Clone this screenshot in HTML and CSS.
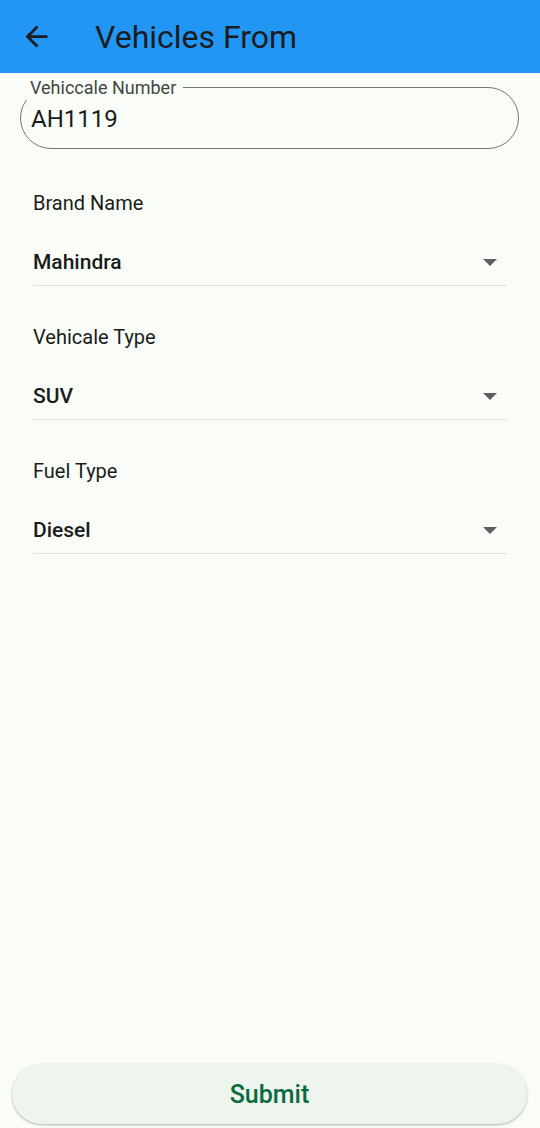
FILE: index.html
```html
<!DOCTYPE html>
<html lang="en">
<head>
<meta charset="utf-8">
<title>Vehicles From</title>
<link rel="stylesheet" href="styles.css">
</head>
<body>
<div class="page">
  <header class="appbar">
    <button class="back" aria-label="Back">
      <svg class="back-icon" viewBox="0 0 24 24" width="33" height="33"><path d="M20 11H7.83l5.59-5.59L12 4l-8 8 8 8 1.41-1.41L7.83 13H20v-2z" fill="currentColor"/></svg>
    </button>
    <h1 class="title">Vehicles From</h1>
  </header>

  <main class="content">
    <div class="field">
      <span class="field-label">Vehiccale Number</span>
      <span class="field-value">AH1119</span>
    </div>

    <section class="dropdown">
      <div class="dd-label">Brand Name</div>
      <div class="dd-row">
        <span class="dd-value">Mahindra</span>
        <span class="caret"></span>
      </div>
    </section>

    <section class="dropdown">
      <div class="dd-label">Vehicale Type</div>
      <div class="dd-row">
        <span class="dd-value">SUV</span>
        <span class="caret"></span>
      </div>
    </section>

    <section class="dropdown">
      <div class="dd-label">Fuel Type</div>
      <div class="dd-row">
        <span class="dd-value">Diesel</span>
        <span class="caret"></span>
      </div>
    </section>
  </main>

  <button class="submit">Submit</button>
</div>
</body>
</html>
```

FILE: styles.css
```css
* { box-sizing: border-box; }

html, body {
  margin: 0;
  padding: 0;
  background: #fafcf7;
}

body {
  font-family: Roboto, "Noto Sans", "Liberation Sans", sans-serif;
  color: #191c1a;
}

.page {
  min-height: 1128px;
  height: 1128px;
  display: flex;
  flex-direction: column;
}

.appbar {
  height: 73px;
  background: #2196f3;
  display: flex;
  align-items: center;
  flex-shrink: 0;
}

.back {
  margin: 0 0 0 20px;
  padding: 0;
  border: 0;
  background: transparent;
  color: #1a1c1e;
  width: 33px;
  height: 33px;
  display: flex;
}

.back-icon { display: block; }

.title {
  margin: 0 0 0 42px;
  font-size: 32px;
  font-weight: 400;
  color: #1a1c1e;
  line-height: 40px;
  letter-spacing: 0;
}

.content {
  flex: 1;
  display: flex;
  flex-direction: column;
}

.field {
  position: relative;
  margin: 14px 21px 0 20px;
  height: 62px;
  border: 1px solid #737873;
  border-radius: 31px;
  display: flex;
  align-items: center;
  padding-left: 10px;
  padding-top: 2px;
}

.field-label {
  position: absolute;
  left: -3px;
  top: -13px;
  padding: 0 7px 0 12px;
  background: #fafcf7;
  font-size: 18px;
  line-height: 25px;
  color: #404843;
}

.field-value {
  font-size: 24px;
  line-height: 28px;
  color: #191c1a;
}

.dropdown {
  margin: 0 33px;
  display: flex;
  flex-direction: column;
}

.field + .dropdown { margin-top: 42px; }
.dropdown + .dropdown { margin-top: 39px; }

.dd-label {
  font-size: 20px;
  line-height: 24px;
  color: #191c1a;
}

.dd-row {
  margin-top: 35px;
  height: 36px;
  padding-bottom: 11px;
  border-bottom: 1px solid #dfe3de;
  display: flex;
  align-items: flex-start;
  justify-content: space-between;
}

.dd-value {
  font-size: 21px;
  line-height: 24px;
  font-weight: 500;
  color: #191c1a;
}

.caret {
  width: 0;
  height: 0;
  margin: 9px 10px 0 0;
  border-left: 7px solid transparent;
  border-right: 7px solid transparent;
  border-top: 7px solid #5f5f5f;
}

.submit {
  margin: 0 13px 4px 12px;
  height: 60px;
  border: 0;
  border-radius: 30px;
  background: #eef4ee;
  box-shadow: 0 1px 3px rgba(0, 0, 0, 0.22), 0 1px 1px rgba(0, 0, 0, 0.08);
  font-family: Roboto, "Noto Sans", "Liberation Sans", sans-serif;
  font-size: 25px;
  font-weight: 500;
  color: #0b6b40;
  flex-shrink: 0;
}
```
